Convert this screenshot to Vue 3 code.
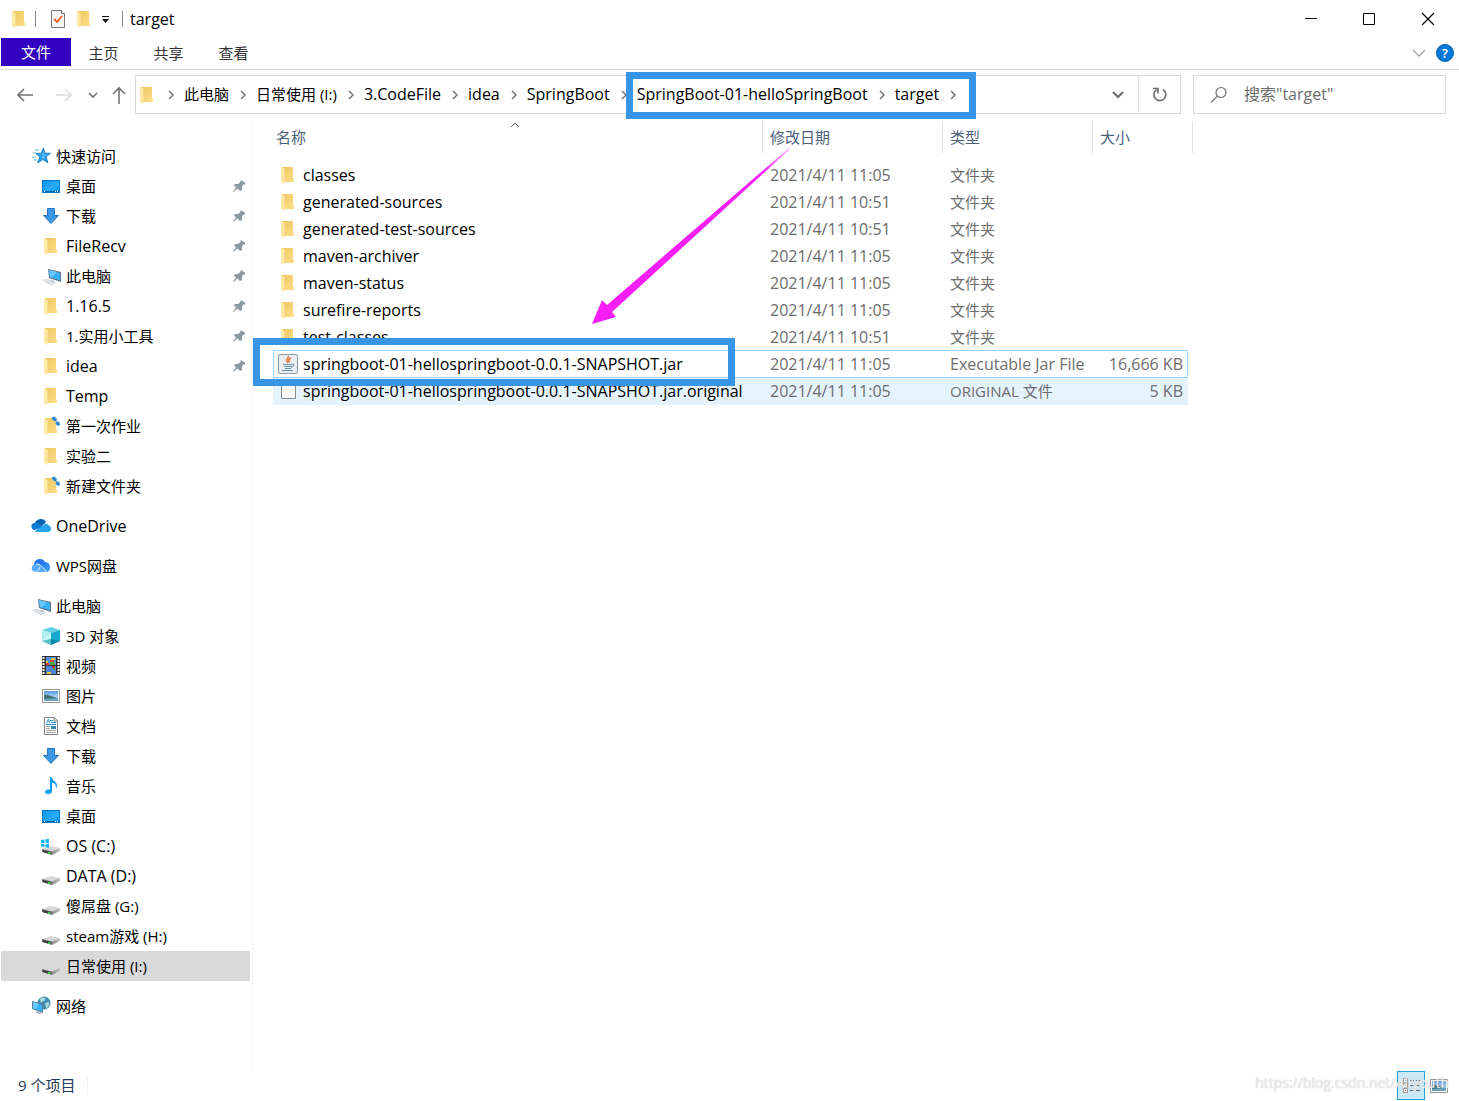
<script setup>
const crumbs = ['此电脑', '日常使用 (I:)', '3.CodeFile', 'idea', 'SpringBoot', 'SpringBoot-01-helloSpringBoot', 'target']

const groups = [
  {
    title: '快速访问',
    icon: 'star',
    items: [
      { name: '桌面', icon: 'desktop', pinned: true },
      { name: '下载', icon: 'download', pinned: true },
      { name: 'FileRecv', icon: 'folder', pinned: true },
      { name: '此电脑', icon: 'pc', pinned: true },
      { name: '1.16.5', icon: 'folder', pinned: true },
      { name: '1.实用小工具', icon: 'folder', pinned: true },
      { name: 'idea', icon: 'folder', pinned: true },
      { name: 'Temp', icon: 'folder' },
      { name: '第一次作业', icon: 'folder-sync' },
      { name: '实验二', icon: 'folder' },
      { name: '新建文件夹', icon: 'folder-sync' },
    ],
  },
  { title: 'OneDrive', icon: 'onedrive', items: [] },
  { title: 'WPS网盘', icon: 'wps', items: [] },
  {
    title: '此电脑',
    icon: 'pc',
    items: [
      { name: '3D 对象', icon: 'cube' },
      { name: '视频', icon: 'video' },
      { name: '图片', icon: 'picture' },
      { name: '文档', icon: 'document' },
      { name: '下载', icon: 'download' },
      { name: '音乐', icon: 'music' },
      { name: '桌面', icon: 'desktop' },
      { name: 'OS (C:)', icon: 'drive-os' },
      { name: 'DATA (D:)', icon: 'drive' },
      { name: '傻屌盘 (G:)', icon: 'drive' },
      { name: 'steam游戏 (H:)', icon: 'drive' },
      { name: '日常使用 (I:)', icon: 'drive', selected: true },
    ],
  },
  { title: '网络', icon: 'network', items: [] },
]

const files = [
  { name: 'classes', date: '2021/4/11 11:05', type: '文件夹', icon: 'folder' },
  { name: 'generated-sources', date: '2021/4/11 10:51', type: '文件夹', icon: 'folder' },
  { name: 'generated-test-sources', date: '2021/4/11 10:51', type: '文件夹', icon: 'folder' },
  { name: 'maven-archiver', date: '2021/4/11 11:05', type: '文件夹', icon: 'folder' },
  { name: 'maven-status', date: '2021/4/11 11:05', type: '文件夹', icon: 'folder' },
  { name: 'surefire-reports', date: '2021/4/11 11:05', type: '文件夹', icon: 'folder' },
  { name: 'test-classes', date: '2021/4/11 10:51', type: '文件夹', icon: 'folder' },
  { name: 'springboot-01-hellospringboot-0.0.1-SNAPSHOT.jar', date: '2021/4/11 11:05', type: 'Executable Jar File', size: '16,666 KB', icon: 'java', state: 'focused' },
  { name: 'springboot-01-hellospringboot-0.0.1-SNAPSHOT.jar.original', date: '2021/4/11 11:05', type: 'ORIGINAL 文件', size: '5 KB', icon: 'blank', state: 'hovered' },
]

// Latin letters run small beside Chinese ones, so purely Latin labels get a larger size.
const isLatin = (text) => !/[\u4e00-\u9fff]/.test(text)
</script>

<template>
  <div class="explorer">
    <svg class="sprite" aria-hidden="true">
      <defs>
        <linearGradient id="g-folder" x1="0" y1="0" x2="1" y2="1"><stop offset="0" stop-color="#efc55c" /><stop offset="1" stop-color="#fde08c" /></linearGradient>
        <linearGradient id="g-blue" x1="0" y1="0" x2="1" y2="1"><stop offset="0" stop-color="#0a94f5" /><stop offset="0.6" stop-color="#2cacfb" /><stop offset="1" stop-color="#0496fc" /></linearGradient>
        <linearGradient id="g-drive" x1="0" y1="0" x2="1" y2="0"><stop offset="0" stop-color="#8b8b8b" /><stop offset="1" stop-color="#c2c3c6" /></linearGradient>
        <linearGradient id="g-arrow" gradientUnits="userSpaceOnUse" x1="197" y1="0" x2="170" y2="24"><stop offset="0" stop-color="#f71ef7" stop-opacity="0.3" /><stop offset="1" stop-color="#f71ef7" /></linearGradient>
        <linearGradient id="g-wps" x1="0" y1="0" x2="1" y2="1"><stop offset="0" stop-color="#1662e8" /><stop offset="1" stop-color="#45a5ff" /></linearGradient>
        <linearGradient id="g-sky" x1="0" y1="0" x2="0" y2="1"><stop offset="0" stop-color="#5b9ce8" /><stop offset="1" stop-color="#e4f4fc" /></linearGradient>
      </defs>
      <symbol id="i-folder" viewBox="0 0 20 20">
        <path d="M4 2h11v11l1 1v3H6z" fill="url(#g-folder)" />
        <path d="M3 2l4 2v13l-1 2-3-2z" fill="#ffe8a4" />
        <path d="M7 4v12" stroke="#f2d27a" stroke-width="1" />
      </symbol>
      <symbol id="i-folder-sync" viewBox="0 0 20 20">
        <use href="#i-folder" width="20" height="20" />
        <path d="M10.500 1.500l3-1 2.500 2.500-1 2.500-3-1zM15 5.500l3.500.5.500 3-2 1-2.500-2z" fill="#3387d3" />
        <path d="M14 4l2 2" stroke="#3387d3" stroke-width="1" />
      </symbol>
      <symbol id="i-star" viewBox="0 0 20 20">
        <path d="M12.500 2l1.600 5.200 5.400.1-4.300 3.500 1.700 6.200-5-3.500-5.200 3.500 2-6-3.700-3.600 5.100-.2z" fill="#2f9de8" stroke="#0b76c8" stroke-width=".8" />
        <path d="M12 5l1 3.500 3 .3-3 2 1 3-3-2" fill="#58bcff" />
        <path d="M4 4h4M2 7h3M1 11h4M3 14h3" stroke="#5db4ec" stroke-width="1" />
      </symbol>
      <symbol id="i-desktop" viewBox="0 0 20 20">
        <rect x="1.500" y="4.500" width="17" height="12" fill="url(#g-blue)" stroke="#0878c6" />
        <path d="M2 15.500h16" stroke="#0766aa" /><path d="M3 15.500h1M14 15.500h1M16 15.500h1" stroke="#fff" />
      </symbol>
      <symbol id="i-download" viewBox="0 0 20 20">
        <path d="M6.500 2.500h7v7h4L10 17.500 2.500 9.500h4z" fill="#3b98e6" stroke="#2475bd" />
      </symbol>
      <symbol id="i-pc" viewBox="0 0 20 20">
        <path d="M7 3l13 3v10L8 12z" fill="#63717f" /><path d="M8 4l11 3v7.500L9 11z" fill="#36b0f8" />
        <path d="M8 4l8 2-5 5.500-2-.5z" fill="#65c8ff" />
        <path d="M10 14l4 1-3 2-3-1z" fill="#b7bfc6" />
        <path d="M1 14l5-1 9 4-5 2z" fill="#c3cbd4" /><path d="M3 14l9 4M5 14l8 3M2 15l4-1M5 16l4-1M8 18l4-1" stroke="#f4f6f8" stroke-width=".5" />
      </symbol>
      <symbol id="i-onedrive" viewBox="0 0 20 20">
        <path d="M3 14C-1 12 0 7 4 7c2-5 9-5 11-1l-5 5z" fill="#0763b5" />
        <path d="M3 14C-1 11 1 7 5 7c3 0 5 2 8 4z" fill="#0e7bd5" />
        <path d="M4 15l9-6c1-2 4-1 4 0 4 1 4 7 0 7H5z" fill="#27a6ed" />
      </symbol>
      <symbol id="i-wps" viewBox="0 0 20 20">
        <path d="M3 9c0-7 9-8 11-3 6 0 7 9 2 10L7 8z" fill="url(#g-wps)" />
        <path d="M4 16C-1 15 0 8 5 8c4 0 8 5 10 8z" fill="#59abff" />
        <path d="M5 8c4-1 7 4 10 7M4 16c2 0 4-2 5-5" fill="none" stroke="#d9efff" stroke-width="1" />
      </symbol>
      <symbol id="i-cube" viewBox="0 0 20 20">
        <path d="M10 1l9 3-9 3-9-3z" fill="#61d1e2" /><path d="M1 4l9 3v12l-9-4z" fill="#b4eef3" />
        <path d="M19 4l-9 3v12l9-4z" fill="#16a8cf" /><path d="M10 13l9 2-9 4z" fill="#087f9f" opacity=".8" /><path d="M1 15l9-2v6z" fill="#37b3c4" opacity=".8" /><path d="M1 15l9-8v5z" fill="#d8fafa" opacity=".6" />
      </symbol>
      <symbol id="i-video" viewBox="0 0 20 20">
        <rect x="1" y="0" width="18" height="19" fill="#36322f" />
        <path d="M2.500 1v17M17.500 1v17" stroke="#fff" stroke-width="2" stroke-dasharray="2 1" />
        <rect x="5" y="1" width="10" height="8" fill="#5590de" /><rect x="5" y="10" width="10" height="8" fill="#4f84db" />
        <path d="M5 7h3v2H5zM9 4h4v2H9z" fill="#e4403f" /><path d="M5 5h2v2H5zM10 2h4v2h-4zM6 16h4v2H6z" fill="#f1cb35" /><path d="M9 6h5v3H9zM12 12h2v2h-2z" fill="#52a63e" />
        <path d="M11 10h3v2h-3z" fill="#cb3330" />
      </symbol>
      <symbol id="i-picture" viewBox="0 0 20 20">
        <rect x="1.500" y="3.500" width="17" height="13" fill="#fff" stroke="#9a9a9a" />
        <rect x="3" y="5" width="14" height="10" fill="url(#g-sky)" />
        <path d="M3 9c4-1 7 2 14 3v3H3z" fill="#427475" /><path d="M3 13l14-1v3H3z" fill="#6ba6c4" />
      </symbol>
      <symbol id="i-document" viewBox="0 0 20 20">
        <path d="M3.500 1.500h10l3 3v14h-13z" fill="#fff" stroke="#858585" /><path d="M13 1.500v3.500h3.500" fill="#e5e5e5" stroke="#858585" />
        <path d="M9 4.500h3M10 6.500h5M5 8.500h10" stroke="#2995d6" /><path d="M5.500 7l2-4 1 4" fill="none" stroke="#2995d6" /><path d="M5 10.500h4M5 12.500h4M5 14.500h10M5 16.500h10" stroke="#aaa" />
        <rect x="10" y="10" width="5" height="3" fill="#3388a8" />
      </symbol>
      <symbol id="i-music" viewBox="0 0 20 20">
        <path d="M9 1h2c0 4 5 4 5 9 0 1-1 2-1 2 0-3-1-5-4-5v8c0 4-7 4-7 1 0-2 3-3 5-2z" fill="#0c9df4" />
      </symbol>
      <symbol id="i-drive" viewBox="0 0 20 20">
        <path d="M1 13l9-3 9 2-8 4z" fill="#d8d8da" /><path d="M1 13l10 2.500V19L1 16z" fill="#6b6b6b" />
        <path d="M11 15.500l8-3.500v3l-8 4z" fill="url(#g-drive)" /><path d="M2 14l7 2v2l-7-2z" fill="#3b3f3b" /><rect x="7" y="16" width="2" height="2" fill="#2fd33c" />
      </symbol>
      <symbol id="i-drive-os" viewBox="0 0 20 20">
        <use href="#i-drive" width="20" height="20" />
        <path d="M0 4l3.500-.5V7H0zM4.500 3.300L8 3v4H4.500zM0 8h3.500v3L0 10.500zM4.500 8H8v3.700l-3.500-.5z" fill="#17b5f0" />
      </symbol>
      <symbol id="i-network" viewBox="0 0 20 20">
        <circle cx="13" cy="7" r="6.500" fill="#428cae" /><path d="M9 3c3-3 6-1 5 1s-4 1-4 4zM14 7l4-1c1 4-2 6-3 6z" fill="#a6d8df" />
        <path d="M1 5l11 3v9L1 13z" fill="#577d98" /><path d="M2 6l9 3v6.500L2 12.500z" fill="#38b3fa" /><path d="M2 6l6 2-4 5-2-.5z" fill="#6dccff" />
        <path d="M6 15l3 1 2 2-6-1z" fill="#a9b4bc" />
      </symbol>
      <symbol id="i-java" viewBox="0 0 20 20">
        <rect x=".5" y=".5" width="19" height="19" rx="1.500" fill="#e9eef1" stroke="#8d9aa3" />
        <path d="M10 2c2 2-3 3-1 5l1 2M13 4c-3 1-3 3-1 4" fill="none" stroke="#e8722c" stroke-width="1.400" />
        <path d="M5 10.500h9M6 12.500h8M7 14.500h6M4 16.500h11" stroke="#6f90a9" stroke-width="1.200" /><path d="M14 10c3 0 2 3-1 3" fill="none" stroke="#557d9c" />
      </symbol>
      <symbol id="i-blank" viewBox="0 0 20 20">
        <path d="M3.500 1.500h14v16h-14z" fill="#f9f9f9" stroke="#8c8c8c" />
      </symbol>
      <symbol id="i-check" viewBox="0 0 20 20">
        <path d="M3.500 1.500h10l3 3v14h-13z" fill="#f6f6f6" stroke="#777" /><path d="M13.500 1.500v3h3" fill="#fff" stroke="#777" />
        <path d="M6 10l3 3 5-6" fill="none" stroke="#f05a23" stroke-width="1.800" />
      </symbol>
      <symbol id="i-pin" viewBox="0 0 14 14">
        <path d="M8.500 1L13 3.500v2l-2 0-1 2.500v3L8 12 5.500 9.500 1.500 13 1 12.500 4 8.500 2 6.500 3 5h3l2.500-2z" fill="#8d989f" />
      </symbol>
      <symbol id="i-next" viewBox="0 0 10 10">
        <path d="M3 1l4 4-4 4" fill="none" stroke="#777" stroke-width="1.500" />
      </symbol>
    </svg>

    <header class="titlebar">
      <svg class="icon"><use href="#i-folder" /></svg>
      <i class="rule first"></i>
      <button class="quick" aria-label="属性"><svg class="icon"><use href="#i-check" /></svg></button>
      <button class="quick" aria-label="新建文件夹"><svg class="icon"><use href="#i-folder" /></svg></button>
      <button class="quick more" aria-label="自定义快速访问工具栏">
        <svg width="10" height="10" viewBox="0 0 10 10"><path d="M2 2.500h7" stroke="#111" /><path d="M2 5h7L5.500 9z" fill="#111" /></svg>
      </button>
      <i class="rule"></i>
      <h1>target</h1>
      <div class="window-buttons">
        <button aria-label="最小化"><svg width="14" height="14" viewBox="0 0 14 14"><path d="M0 6.500h12" stroke="#000" /></svg></button>
        <button aria-label="最大化"><svg width="14" height="14" viewBox="0 0 14 14"><path d="M.5 1.500h11v11H.5z" fill="none" stroke="#000" /></svg></button>
        <button aria-label="关闭"><svg width="14" height="14" viewBox="0 0 14 14"><path d="M1 1l12 12M13 1L1 13" stroke="#000" stroke-width="1.100" /></svg></button>
      </div>
    </header>

    <nav class="ribbon">
      <button class="tab file">文件</button>
      <button class="tab">主页</button>
      <button class="tab">共享</button>
      <button class="tab">查看</button>
      <div class="ribbon-end">
        <button aria-label="展开功能区"><svg width="14" height="10" viewBox="0 0 14 10"><path d="M1 2l6 6 6-6" fill="none" stroke="#a0a0a0" stroke-width="1.300" /></svg></button>
        <button class="help" aria-label="帮助">?</button>
      </div>
    </nav>

    <div class="navigation">
      <div class="arrows">
        <button aria-label="后退"><svg width="16" height="16" viewBox="0 0 16 16"><path d="M16 8H1M7 2L1 8l6 6" fill="none" stroke="#727272" stroke-width="1.600" /></svg></button>
        <button aria-label="前进"><svg width="16" height="16" viewBox="0 0 16 16"><path d="M0 8h15M9 2l6 6-6 6" fill="none" stroke="#dcdcdc" stroke-width="1.600" /></svg></button>
        <button class="recent" aria-label="最近位置"><svg width="10" height="10" viewBox="0 0 10 10"><path d="M1 3l4 4 4-4" fill="none" stroke="#727272" stroke-width="1.600" /></svg></button>
        <button class="up" aria-label="上移"><svg width="14" height="18" viewBox="0 0 14 18"><path d="M7 18V2M1 8l6-6 6 6" fill="none" stroke="#727272" stroke-width="1.600" /></svg></button>
      </div>
      <div class="address">
        <svg class="icon"><use href="#i-folder" /></svg>
        <svg class="next"><use href="#i-next" /></svg>
        <template v-for="crumb in crumbs" :key="crumb">
          <a href="#" :class="{ latin: isLatin(crumb) }">{{ crumb }}</a>
          <svg class="next"><use href="#i-next" /></svg>
        </template>
        <button class="drop" aria-label="以前的位置"><svg width="12" height="10" viewBox="0 0 12 10"><path d="M1 2l5 5 5-5" fill="none" stroke="#6a6a6a" stroke-width="2" /></svg></button>
        <button class="refresh" aria-label="刷新">
          <svg width="16" height="16" viewBox="0 0 16 16"><path d="M11 2.500a6 6 0 1 1-6.500.2M1 1.500h5v5" fill="none" stroke="#727272" stroke-width="1.700" /></svg>
        </button>
      </div>
      <label class="search">
        <svg width="18" height="18" viewBox="0 0 18 18"><circle cx="11" cy="6.500" r="5" fill="none" stroke="#777" stroke-width="1.200" /><path d="M7.500 10L1 16.500" stroke="#777" stroke-width="1.300" /></svg>
        <input type="search" aria-label="搜索" placeholder="搜索&quot;target&quot;" />
      </label>
    </div>

    <div class="body">
      <aside class="tree">
        <section v-for="group in groups" :key="group.title">
          <a href="#" class="node"><svg class="icon"><use :href="'#i-' + group.icon" /></svg><span :class="{ latin: isLatin(group.title) }">{{ group.title }}</span></a>
          <a v-for="item in group.items" :key="item.name" href="#" class="node child" :class="{ selected: item.selected }">
            <svg class="icon"><use :href="'#i-' + item.icon" /></svg><span :class="{ latin: isLatin(item.name) }">{{ item.name }}</span>
            <svg v-if="item.pinned" class="pin"><use href="#i-pin" /></svg>
          </a>
        </section>
      </aside>

      <main class="content">
        <table>
          <colgroup><col class="c-name" /><col class="c-date" /><col class="c-type" /><col class="c-size" /></colgroup>
          <thead>
            <tr>
              <th scope="col">名称<svg class="sort" viewBox="0 0 10 6"><path d="M1 5l4-4 4 4" fill="none" stroke="#666" /></svg></th>
              <th scope="col">修改日期</th>
              <th scope="col">类型</th>
              <th scope="col">大小</th>
            </tr>
          </thead>
          <tbody>
            <tr v-for="file in files" :key="file.name" :class="file.state">
              <td><div class="file-name"><svg class="icon"><use :href="'#i-' + file.icon" /></svg><span class="latin">{{ file.name }}</span></div></td>
              <td class="latin">{{ file.date }}</td>
              <td :class="{ latin: isLatin(file.type) }">{{ file.type }}</td>
              <td class="latin">{{ file.size }}</td>
            </tr>
          </tbody>
        </table>
      </main>
    </div>

    <footer class="status">
      <span class="count">9 个项目</span>
      <div class="views">
        <button class="active" aria-label="详细信息">
          <svg width="20" height="18" viewBox="0 0 20 18"><path d="M2.500 1.500h4v4h-4zM2.500 6.500h4v4h-4zM2.500 11.500h4v4h-4z" fill="#fff" stroke="#999" /><path d="M4 3h1v1H4z" fill="#246ba8" /><path d="M4 8h1v1H4z" fill="#407b31" /><path d="M4 13h1v1H4z" fill="#c03b2b" /><path d="M9 3.500h4M15 3.500h4M9 8.500h4M15 8.500h4M9 13.500h4M15 13.500h4" stroke="#666" /></svg>
        </button>
        <button aria-label="大缩略图"><svg class="icon"><use href="#i-picture" /></svg></button>
      </div>
      <span class="watermark">https://blog.csdn.net/Aliyouth</span>
    </footer>

    <div class="mark path-mark"></div>
    <div class="mark file-mark"></div>
    <svg class="pointer" viewBox="0 0 198 177"><path d="M197 0L15 157l-5-5L0 176l24-7-4-5L198 1z" fill="url(#g-arrow)" /></svg>
  </div>
</template>

<style>
body {
  margin: 0;
  background: #fff;
}
</style>

<style scoped>
.explorer {
  position: relative;
  display: flex;
  flex-direction: column;
  min-height: 100vh;
  overflow: hidden;
  background: #fff;
  color: #000;
  font: 15px/20px "Open Sans", "Noto Sans", "Noto Sans CJK SC", sans-serif;
}
.explorer * {
  box-sizing: border-box;
}
.latin {
  font-size: 16px;
}
.sprite {
  position: absolute;
  width: 0;
  height: 0;
}
button {
  display: flex;
  align-items: center;
  justify-content: center;
  padding: 0;
  border: 0;
  background: none;
  color: inherit;
  font: inherit;
}
a {
  color: inherit;
  text-decoration: none;
}
svg {
  flex: none;
}
.icon {
  width: 20px;
  height: 20px;
}

.titlebar {
  display: flex;
  align-items: center;
  height: 38px;
  padding-left: 9px;
}
.rule {
  width: 1px;
  height: 16px;
  background: #888;
}
.rule.first {
  margin: 0 6px;
}
.quick {
  margin-left: 6px;
}
.quick.more {
  margin-right: 12px;
}
h1 {
  margin: 0 0 0 7px;
  font-size: 16px;
  font-weight: 400;
}
.window-buttons {
  display: flex;
  margin-left: auto;
  padding-right: 2px;
}
.window-buttons button {
  width: 58px;
  height: 38px;
}

.ribbon {
  display: flex;
  height: 32px;
  padding-left: 1px;
  border-bottom: 1px solid #dadbdc;
}
.tab {
  width: 65px;
  height: 30px;
  color: #333;
}
.tab.file {
  width: 70px;
  height: 28px;
  background: #3200c0;
  color: #fff;
}
.ribbon-end {
  display: flex;
  gap: 10px;
  align-items: center;
  height: 30px;
  margin-left: auto;
  padding-right: 5px;
}
.help {
  width: 18px;
  height: 18px;
  border: 1px solid #0563b1;
  border-radius: 50%;
  background: #0078d7;
  color: #fff;
  font-size: 13px;
  font-weight: 600;
  line-height: 16px;
}

.navigation {
  display: flex;
  height: 51px;
  padding: 5px 13px 7px 5px;
}
.arrows {
  display: flex;
  height: 39px;
}
.arrows button {
  width: 39px;
}
.arrows .recent {
  width: 20px;
}
.arrows .up {
  width: 32px;
}
.address {
  display: flex;
  flex: 1;
  align-items: center;
  height: 39px;
  padding-left: 1px;
  border: 1px solid #d9d9d9;
  white-space: nowrap;
}
.address a {
  padding-bottom: 2px;
}
.next {
  width: 10px;
  height: 10px;
  margin: 0 8px 0 9px;
}
.drop {
  width: 40px;
  height: 37px;
  margin-left: auto;
}
.refresh {
  width: 42px;
  height: 37px;
  border-left: 1px solid #d9d9d9;
}
.search {
  display: flex;
  align-items: center;
  gap: 16px;
  width: 253px;
  height: 39px;
  margin-left: 12px;
  padding-left: 16px;
  border: 1px solid #d9d9d9;
}
.search input {
  flex: 1;
  min-width: 0;
  padding: 0 0 2px;
  border: 0;
  outline: 0;
  background: none;
  font: inherit;
  font-size: 16px;
}
.search input::placeholder {
  color: #6d6d6d;
  opacity: 1;
}

.body {
  display: flex;
  flex: 1;
}
.tree {
  width: 253px;
  padding: 20px 2px 0 1px;
  border-right: 1px solid #f2f2f2;
}
.tree section + section {
  margin-top: 10px;
}
.node {
  display: flex;
  align-items: center;
  gap: 5px;
  height: 30px;
  padding: 0 4px 0 30px;
}
.node.child {
  padding-left: 40px;
}
.node.selected {
  background: #d9d9d9;
}
.pin {
  width: 14px;
  height: 14px;
  margin-left: auto;
}

.content {
  flex: 1;
  padding-left: 20px;
}
table {
  width: 920px;
  border-spacing: 0;
  table-layout: fixed;
}
.c-name {
  width: 490px;
}
.c-date {
  width: 180px;
}
.c-type {
  width: 150px;
}
.c-size {
  width: 100px;
}
th {
  position: relative;
  height: 32px;
  padding: 0 7px;
  border-right: 1px solid #e2e2e2;
  color: #4c607a;
  font-weight: 400;
  text-align: left;
}
th:first-child {
  padding-left: 3px;
}
.sort {
  position: absolute;
  top: 1px;
  left: 237px;
  width: 10px;
  height: 6px;
}
tbody::before {
  content: "";
  display: block;
  height: 8px;
}
td {
  height: 27px;
  padding: 1px 0 0 7px;
  color: #6d6d6d;
  white-space: nowrap;
}
td:first-child {
  padding-left: 5px;
  color: #000;
}
td:last-child {
  padding-right: 5px;
  border-right: 5px solid transparent;
  background-clip: padding-box;
  text-align: right;
}
.file-name {
  display: flex;
  align-items: center;
  gap: 5px;
}
.focused td,
.hovered td {
  padding-top: 0;
}
.focused td {
  height: 28px;
  box-shadow: inset 0 1px #99d1ff, inset 0 -1px #99d1ff;
}
.focused td:first-child {
  box-shadow: inset 0 1px #99d1ff, inset 0 -1px #99d1ff, inset 1px 0 #99d1ff;
}
.focused td:last-child {
  box-shadow: inset 0 1px #99d1ff, inset 0 -1px #99d1ff, inset -1px 0 #99d1ff;
}
.hovered td {
  padding-bottom: 1px;
  background-color: #e5f3ff;
}

.status {
  position: relative;
  display: flex;
  align-items: flex-start;
  height: 30px;
  padding: 0 10px 0 18px;
}
.count {
  margin-top: 4px;
  padding-right: 12px;
  border-right: 1px solid #f0f0f0;
  color: #1e395b;
}
.views {
  display: flex;
  gap: 4px;
  margin-left: auto;
}
.views button {
  height: 29px;
}
.views .active {
  width: 28px;
  border: 1px solid #26a0da;
  background: #cbe8f6;
}
.watermark {
  position: absolute;
  right: 10px;
  top: 2px;
  color: rgba(255, 255, 255, 0.8);
  font-size: 14px;
  text-shadow: 0 0 1px #aaa;
}

.mark {
  position: absolute;
  border: 7px solid #3894e4;
  pointer-events: none;
}
.path-mark {
  top: 72px;
  left: 626px;
  width: 350px;
  height: 47px;
}
.file-mark {
  top: 338px;
  left: 253px;
  width: 482px;
  height: 48px;
}
.pointer {
  position: absolute;
  top: 148px;
  left: 592px;
  width: 198px;
  height: 177px;
  pointer-events: none;
}
</style>
